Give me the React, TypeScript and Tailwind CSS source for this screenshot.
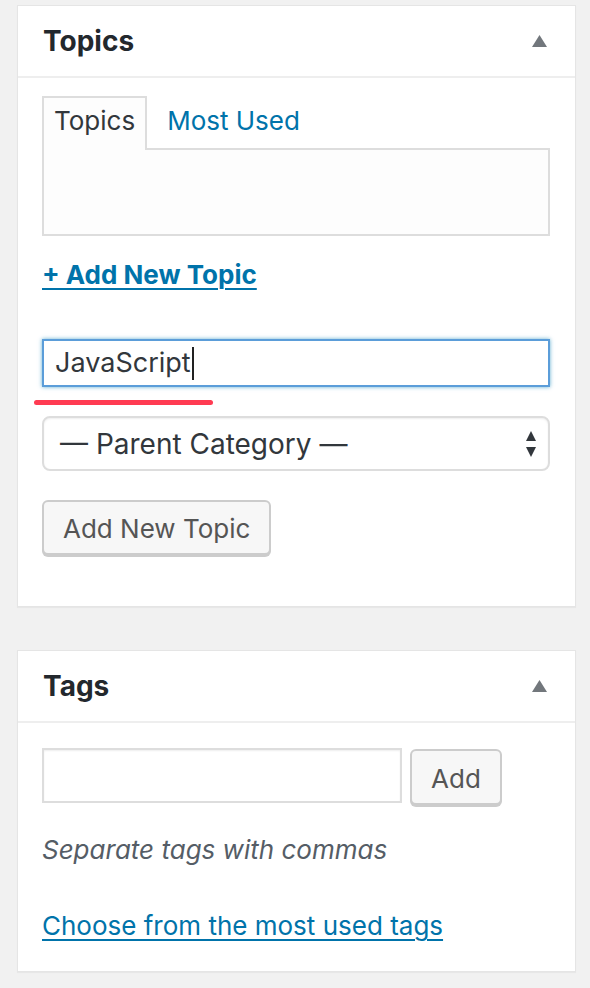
import React from "react";

function Triangle() {
  return (
    <svg width="15" height="12" viewBox="0 0 15 12" className="block">
      <polygon points="7.5,0 15,12 0,12" fill="#72777c" />
    </svg>
  );
}

function Header({ title }: { title: string }) {
  return (
    <div className="flex h-[72px] items-center justify-between border-b-2 border-[#eeeeee] pl-[25px] pr-[28px]">
      <h2 className="text-[28px] font-bold leading-none text-[#23282d]">{title}</h2>
      <Triangle />
    </div>
  );
}

export default function App() {
  return (
    <div
      className="min-h-[988px] w-[590px] bg-[#f1f1f1] pt-[5px] pl-[17px] pr-[14px]"
      style={{ fontFamily: "Inter, Roboto, 'Liberation Sans', sans-serif" }}
    >
      {/* Topics panel */}
      <div className="border border-[#e5e5e5] bg-white shadow-[0_1px_1px_rgba(0,0,0,0.04)]">
        <Header title="Topics" />
        <div className="pl-[24px] pr-[25px] pt-[18px] pb-[51px] text-[26px] text-[#32373c]">
          <div className="flex items-start">
            <div className="relative z-10 -mb-[2px] h-[54px] border-2 border-b-0 border-[#dddddd] bg-[#fdfdfd] px-[10px] pt-[5px] leading-[36px]">
              Topics
            </div>
            <a className="ml-[20px] pt-[7px] leading-[36px] text-[#0073aa]">Most Used</a>
          </div>
          <div className="h-[88px] border-2 border-[#dddddd] bg-[#fdfdfd]" />
          <div className="mt-[21px] leading-[36px]">
            <a className="font-bold text-[#0073aa] underline decoration-2 underline-offset-[4px]">+ Add New Topic</a>
          </div>
          <div className="mt-[46px] flex h-[48px] items-center border-2 border-[#5b9dd9] bg-white pl-[11px] text-[27px] shadow-[0_0_4px_rgba(30,140,190,0.7)]">
            <span>JavaScript</span>
            <span className="ml-[1px] inline-block h-[33px] w-[2px] bg-[#222]" />
          </div>
          <div className="-ml-[8px] mt-[13px] h-[5px] w-[179px] rounded-full bg-[#ff3b52]" />
          <div className="mt-[11px] flex h-[55px] items-center justify-between rounded-[8px] border-2 border-[#dddddd] bg-white pl-[16px] pr-[12px] text-[28px] shadow-[inset_0_1px_2px_rgba(0,0,0,0.07)]">
            <span>— Parent Category —</span>
            <svg width="10" height="26" viewBox="0 0 10 26">
              <polygon points="5,0 10,10 0,10" fill="#32373c" />
              <polygon points="0,16 10,16 5,26" fill="#32373c" />
            </svg>
          </div>
          <div className="mt-[29px]">
            <button className="h-[55px] rounded-[6px] border-2 border-[#cccccc] bg-[#f7f7f7] px-[19px] pt-[2px] text-[26px] text-[#555555] shadow-[0_2px_0_#cccccc]">
              Add New Topic
            </button>
          </div>
        </div>
      </div>

      {/* Tags panel */}
      <div className="mt-[43px] border border-[#e5e5e5] bg-white shadow-[0_1px_1px_rgba(0,0,0,0.04)]">
        <Header title="Tags" />
        <div className="pl-[24px] pr-[25px] pt-[25px] pb-[27px] text-[26px] text-[#32373c]">
          <div className="flex items-start">
            <div className="h-[55px] w-[360px] border-2 border-[#dddddd] bg-white shadow-[inset_0_1px_2px_rgba(0,0,0,0.07)]" />
            <button className="ml-[8px] mt-[1px] h-[56px] w-[92px] rounded-[6px] border-2 border-[#cccccc] bg-[#f7f7f7] pt-[2px] text-[26px] text-[#555555] shadow-[0_2px_0_#cccccc]">
              Add
            </button>
          </div>
          <p className="mt-[27px] italic leading-[36px] text-[#555d66]">Separate tags with commas</p>
          <div className="mt-[40px] leading-[36px]">
            <a className="text-[#0073aa] underline decoration-2 underline-offset-[4px]">Choose from the most used tags</a>
          </div>
        </div>
      </div>
    </div>
  );
}
